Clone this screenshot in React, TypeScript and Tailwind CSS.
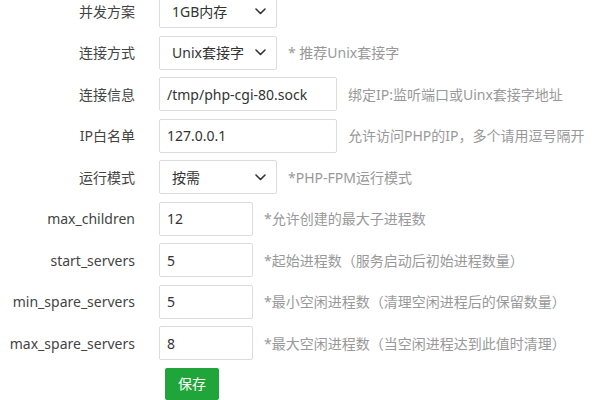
import React from 'react';

type Row = {
  label: string;
  kind: 'select' | 'input';
  value: string;
  width: string;
  hint?: string;
};

const rows: Row[] = [
  { label: '并发方案', kind: 'select', value: '1GB内存', width: 'w-[118px]' },
  { label: '连接方式', kind: 'select', value: 'Unix套接字', width: 'w-[118px]', hint: '* 推荐Unix套接字' },
  { label: '连接信息', kind: 'input', value: '/tmp/php-cgi-80.sock', width: 'w-[178px]', hint: '绑定IP:监听端口或Uinx套接字地址' },
  { label: 'IP白名单', kind: 'input', value: '127.0.0.1', width: 'w-[178px]', hint: '允许访问PHP的IP，多个请用逗号隔开' },
  { label: '运行模式', kind: 'select', value: '按需', width: 'w-[118px]', hint: '*PHP-FPM运行模式' },
  { label: 'max_children', kind: 'input', value: '12', width: 'w-[94px]', hint: '*允许创建的最大子进程数' },
  { label: 'start_servers', kind: 'input', value: '5', width: 'w-[94px]', hint: '*起始进程数（服务启动后初始进程数量）' },
  { label: 'min_spare_servers', kind: 'input', value: '5', width: 'w-[94px]', hint: '*最小空闲进程数（清理空闲进程后的保留数量）' },
  { label: 'max_spare_servers', kind: 'input', value: '8', width: 'w-[94px]', hint: '*最大空闲进程数（当空闲进程达到此值时清理）' },
];

function Chevron() {
  return (
    <svg width="11" height="7" viewBox="0 0 11 7" className="shrink-0">
      <path d="M1 1l4.5 4.5L10 1" fill="none" stroke="#333" strokeWidth="1.6" strokeLinecap="round" strokeLinejoin="round" />
    </svg>
  );
}

function Field({ row }: { row: Row }) {
  if (row.kind === 'select') {
    return (
      <div
        className={`${row.width} flex h-[34px] shrink-0 items-center justify-between rounded-[2px] border border-[#dcdcdc] bg-white pl-[12px] pr-[10px] text-[#333]`}
      >
        <span>{row.value}</span>
        <Chevron />
      </div>
    );
  }
  return (
    <div
      className={`${row.width} flex h-[34px] shrink-0 items-center rounded-[2px] border border-[#dcdcdc] bg-white px-[7px] text-[#333]`}
    >
      {row.value}
    </div>
  );
}

export default function App() {
  return (
    <div
      className="h-[400px] w-[600px] overflow-hidden bg-white text-[14px]"
      style={{ fontFamily: '"Noto Sans", "Noto Sans CJK SC", sans-serif' }}
    >
      <div className="-mt-[6px] flex flex-col gap-[7.5px]">
        {rows.map((row) => (
          <div key={row.label} className="flex h-[34px] items-center">
            <div className="w-[135px] shrink-0 text-right text-[#444]">{row.label}</div>
            <div className="ml-[24px] flex items-center">
              <Field row={row} />
              {row.hint && <span className="ml-[11px] whitespace-nowrap text-[#999]">{row.hint}</span>}
            </div>
          </div>
        ))}
        <div className="flex">
          <button className="ml-[165px] h-[32px] w-[54px] rounded-[2px] bg-[#20a53a] text-white">保存</button>
        </div>
      </div>
    </div>
  );
}
